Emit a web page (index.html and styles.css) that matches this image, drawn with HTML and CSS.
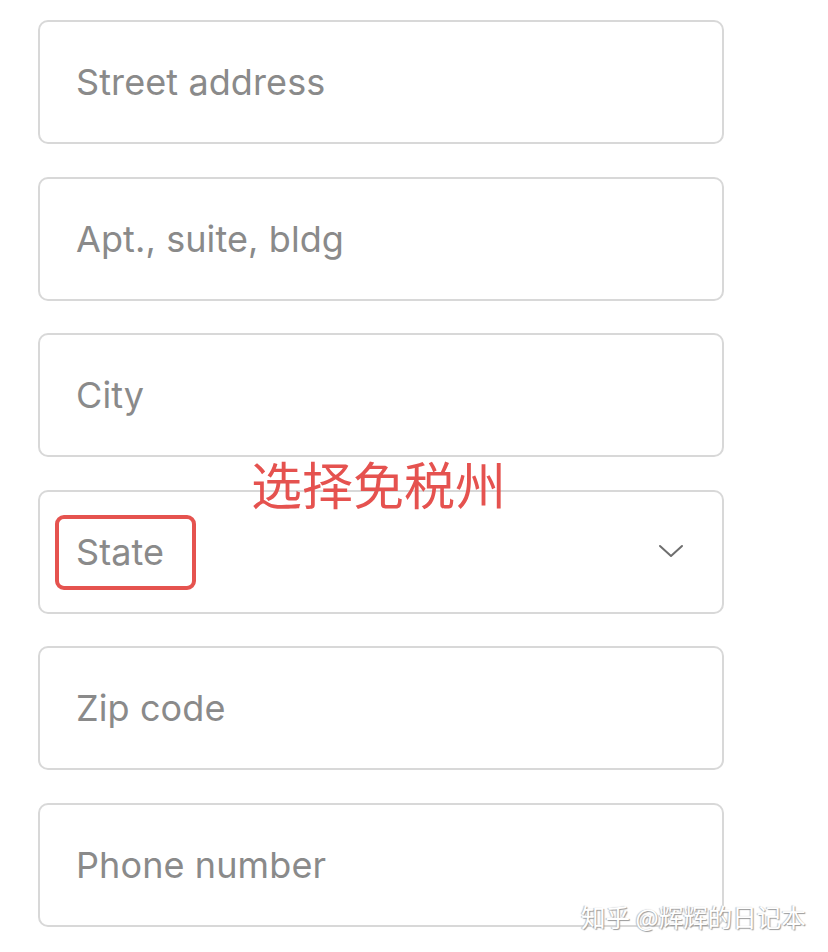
FILE: index.html
```html
<!DOCTYPE html>
<html lang="zh-CN">
<head>
    <meta charset="UTF-8" />
    <title>Shipping address</title>
    <link rel="stylesheet" href="styles.css">
</head>
<body>
    <form class="address-form">
        <div class="field"><span class="placeholder">Street address</span></div>
        <div class="field"><span class="placeholder">Apt., suite, bldg</span></div>
        <div class="field"><span class="placeholder">City</span></div>
        <div class="field field-select">
            <span class="placeholder">State</span>
            <svg class="chevron" width="26" height="16" viewBox="0 0 26 16">
                <path d="M2 2 L13 12 L24 2" fill="none" stroke="#6e6e6e" stroke-width="2" stroke-linecap="round" stroke-linejoin="round" />
            </svg>
            <!-- annotation on top of the screenshot -->
            <div class="mark-box"></div>
            <div class="mark-note">选择免税州</div>
        </div>
        <div class="field"><span class="placeholder">Zip code</span></div>
        <div class="field"><span class="placeholder">Phone number</span></div>
    </form>

    <div class="watermark">知乎 @辉辉的日记本</div>
</body>
</html>
```

FILE: styles.css
```css
body {
    margin: 0;
    background-color: #fff;
    font-family: Inter, 'Noto Sans', sans-serif;
    width: 828px;
    height: 952px;
    position: relative;
    overflow: hidden;
}
.address-form {
    display: flex;
    flex-direction: column;
    gap: 32.6px;
    padding: 20px 0 0 38px;
    width: 686px;
}
.field {
    position: relative;
    height: 124px;
    box-sizing: border-box;
    border: 2px solid #d8d8d8;
    border-radius: 10px;
    display: flex;
    align-items: center;
    padding: 0 37px 0 36px;
}
.placeholder {
    color: #8a8a8a;
    font-size: 36px;
    line-height: 1;
    letter-spacing: 0.1px;
}
.field-select {
    justify-content: space-between;
}
.chevron {
    margin-right: 1px;
}
.mark-box {
    position: absolute;
    left: 15px;
    top: 23px;
    width: 141px;
    height: 75px;
    box-sizing: border-box;
    border: 4px solid #e5534f;
    border-radius: 9px;
}
.mark-note {
    position: absolute;
    left: 211px;
    top: -34px;
    font-family: 'Noto Sans CJK SC', sans-serif;
    font-size: 51px;
    line-height: 1;
    color: #e5524f;
}
.watermark {
    position: absolute;
    left: 581px;
    top: 905px;
    font-family: 'Noto Sans CJK SC', sans-serif;
    font-size: 24.5px;
    line-height: 1;
    color: #fff;
    text-shadow: 1px 1px 1px #9a9a9a, -1px 0 1px #bcbcbc;
}
```
